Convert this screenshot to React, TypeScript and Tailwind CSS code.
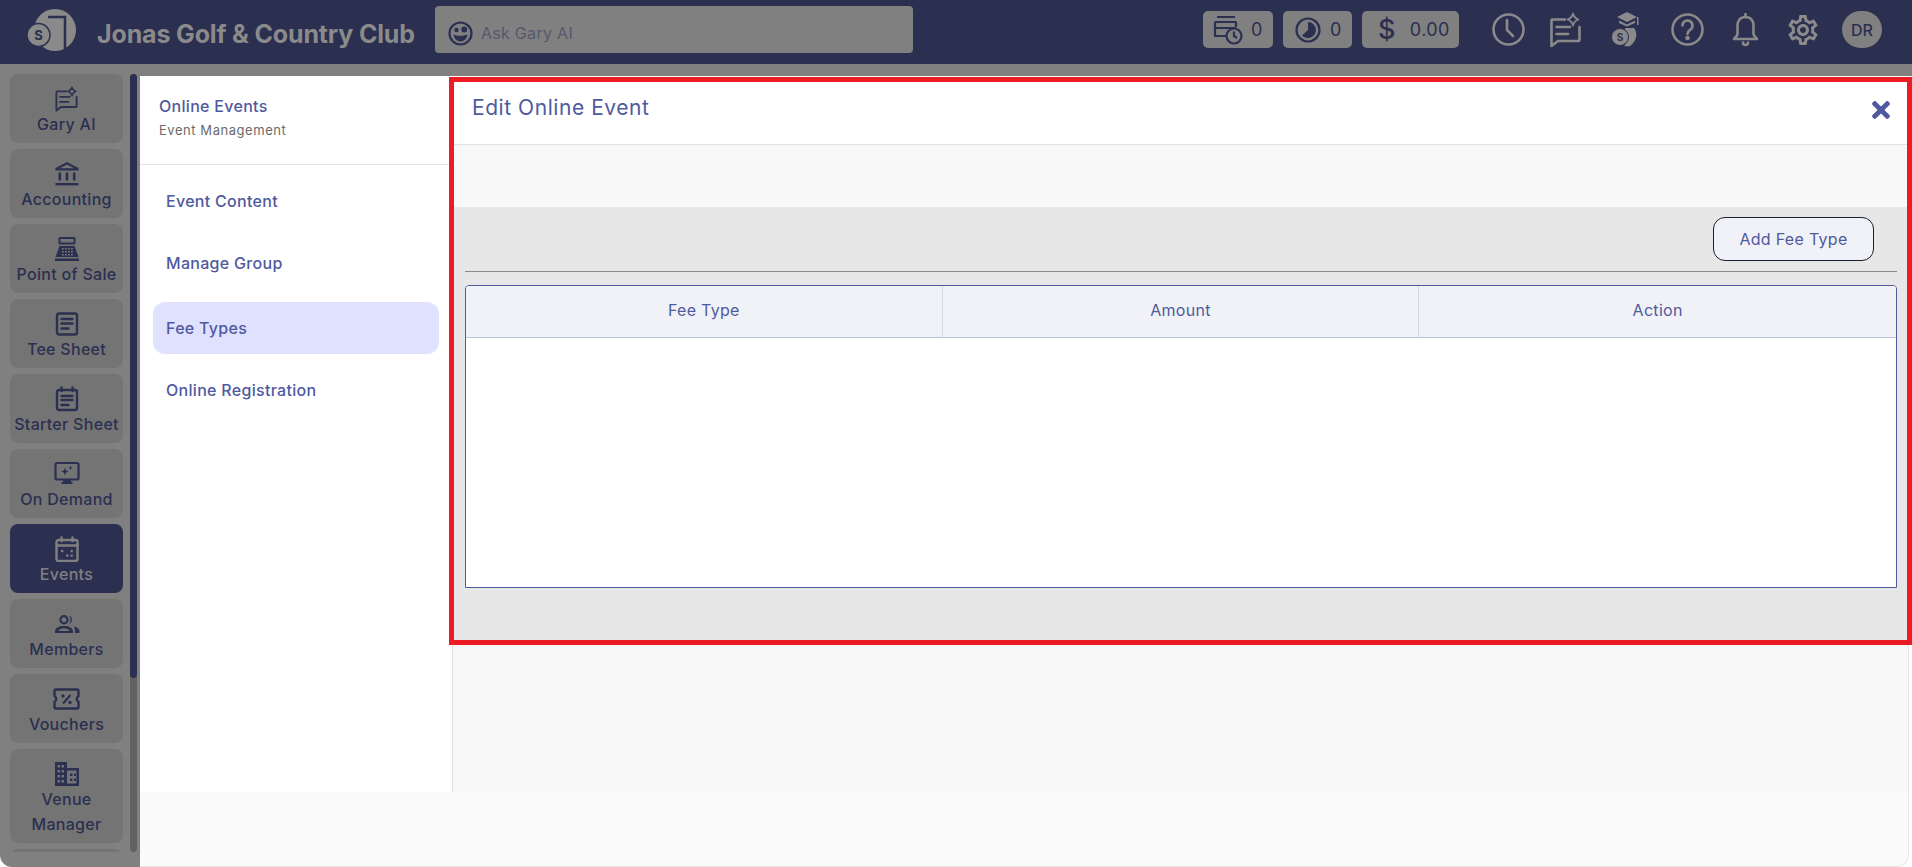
import React from "react";
import { FaTimes } from "react-icons/fa";
import { MdOutlineSettings } from "react-icons/md";

const Ic = ({ children, w = 26, h = 26, vb = "0 0 24 24", c = "#2b2f50", sw = 2 }: any) => (
  <svg width={w} height={h} viewBox={vb} fill="none" stroke={c} strokeWidth={sw} strokeLinecap="round" strokeLinejoin="round">
    {children}
  </svg>
);

const navy = "#2b2f50";
const hdr = "#8a8a8a";

const ChatSpark = ({ c, w = 31, h = 36 }: any) => (
  <Ic w={w} h={h} c={c} vb="0 0 31 36" sw={2.6}>
    <path d="M15 7.500H2.500Q1.500 7.500 1.500 8.500V34L8 29H28.500Q29.500 29 29.500 28V15" />
    <path d="M6.500 15H20M6.500 22H18" />
    <path d="M23 1.500Q24 6 28.500 7.500Q24 9 23 13.500Q22 9 17.500 7.500Q22 6 23 1.500z" strokeWidth="1.800" />
  </Ic>
);

const items: { label: string; icon: React.ReactNode; tall?: boolean; active?: boolean }[] = [
  { label: "Gary AI", icon: <ChatSpark c={navy} w={23} h={26} /> },
  {
    label: "Accounting",
    icon: (
      <svg width="26" height="26" viewBox="0 0 26 26" fill={navy}>
        <path d="M13 1L1.500 7v2.500h23V7zM13 3.600L20 7.200H6z" fillRule="evenodd" />
        <rect x="4.500" y="11.500" width="2.600" height="8" />
        <rect x="11.700" y="11.500" width="2.600" height="8" />
        <rect x="18.900" y="11.500" width="2.600" height="8" />
        <rect x="1.500" y="22" width="23" height="2.400" />
      </svg>
    ),
  },
  {
    label: "Point of Sale",
    icon: (
      <svg width="26" height="26" viewBox="0 0 26 26" fill={navy}>
        <path d="M6 1h14a1.500 1.500 0 0 1 1.500 1.500V7A1.500 1.500 0 0 1 20 8.500H6A1.500 1.500 0 0 1 4.500 7V2.500A1.500 1.500 0 0 1 6 1zM6.500 3v3.500h13V3z" fillRule="evenodd" />
        <path d="M5.500 10h15l4 11H1.500zM1 22.500h24V25H1z" />
        <g fill="#747474">
          <rect x="8" y="12" width="1.800" height="1.500" /><rect x="11" y="12" width="1.800" height="1.500" /><rect x="14" y="12" width="1.800" height="1.500" /><rect x="17" y="12" width="1.800" height="1.500" />
          <rect x="8" y="15" width="1.800" height="1.500" /><rect x="11" y="15" width="1.800" height="1.500" /><rect x="14" y="15" width="1.800" height="1.500" /><rect x="17" y="15" width="1.800" height="1.500" />
          <rect x="8" y="18" width="1.800" height="1.500" /><rect x="11" y="18" width="1.800" height="1.500" /><rect x="14" y="18" width="1.800" height="1.500" /><rect x="17" y="18" width="1.800" height="1.500" />
        </g>
      </svg>
    ),
  },
  {
    label: "Tee Sheet",
    icon: (
      <Ic vb="0 0 26 26" sw={2.4}>
        <rect x="3" y="2.500" width="20" height="21" rx="2" />
        <path d="M7.500 8h11M7.500 12.500h11M7.500 17.500h7" />
      </Ic>
    ),
  },
  {
    label: "Starter Sheet",
    icon: (
      <Ic vb="0 0 26 26" sw={2.4}>
        <rect x="3" y="4" width="20" height="20" rx="2" />
        <path d="M7.500 1.500V5M18.500 1.500V5M7.500 10h11M7.500 14h11M7.500 19h7" />
      </Ic>
    ),
  },
  {
    label: "On Demand",
    icon: (
      <svg width="26" height="26" viewBox="0 0 26 26" fill="none">
        <rect x="1.500" y="2" width="23" height="16.500" rx="1.500" stroke={navy} strokeWidth="2.200" />
        <path d="M9 18.500h8v2.500H9zM7.500 21h11v2h-11z" fill={navy} />
        <path d="M11 6.500l1 3 3 1-3 1-1 3-1-3-3-1 3-1zM16.500 4.500l.6 1.700 1.700.6-1.700.6-.6 1.700-.6-1.700-1.700-.6 1.700-.6z" fill={navy} />
      </svg>
    ),
  },
  {
    label: "Events",
    active: true,
    icon: (
      <svg width="26" height="26" viewBox="0 0 26 26" fill="none" stroke="#808080" strokeWidth="2.400" strokeLinecap="round">
        <rect x="2.500" y="4" width="21" height="21" rx="2" />
        <path d="M2.500 9.500h21M7.500 1.500V5M18.500 1.500V5" />
        <g fill="#808080" stroke="none">
          <rect x="7" y="14" width="2.400" height="2.200" /><rect x="16.500" y="14" width="2.400" height="2.200" /><rect x="12" y="18.500" width="2.400" height="2.200" /><rect x="16.500" y="18.500" width="2.400" height="2.200" />
        </g>
      </svg>
    ),
  },
  {
    label: "Members",
    icon: (
      <svg width="26" height="18" viewBox="0 0 26 18" fill="none">
        <circle cx="10" cy="4.800" r="3.600" stroke={navy} strokeWidth="2.200" />
        <path d="M15 .6a4.500 4.500 0 0 1 0 8.400a7 7 0 0 0 0-8.400z" fill={navy} />
        <path d="M1 18v-1.500c0-3.500 4-5.500 9-5.500s9 2 9 5.500V18zM4.500 16h11c-.8-1.600-3-2.700-5.500-2.700s-4.700 1.100-5.500 2.700z" fill={navy} fillRule="evenodd" />
        <path d="M20 11.500c3 .8 5.500 2.500 5.500 5V18H21c0-2.500-.2-4.500-1-6.500z" fill={navy} />
      </svg>
    ),
  },
  {
    label: "Vouchers",
    icon: (
      <svg width="27" height="26" viewBox="0 0 27 26" fill="none">
        <path d="M3 3.500h21a1.500 1.500 0 0 1 1.500 1.500v5a3.500 3.500 0 0 0 0 6v5a1.500 1.500 0 0 1-1.500 1.500H3A1.500 1.500 0 0 1 1.500 21v-5a3.500 3.500 0 0 0 0-6V5A1.500 1.500 0 0 1 3 3.500z" stroke={navy} strokeWidth="2.400" />
        <path d="M10 17.500L17.500 9" stroke={navy} strokeWidth="2" />
        <circle cx="10" cy="10" r="1.700" fill={navy} /><circle cx="17" cy="16.500" r="1.700" fill={navy} />
      </svg>
    ),
  },
  {
    label: "Venue Manager",
    tall: true,
    icon: (
      <svg width="26" height="26" viewBox="0 0 26 26" fill={navy}>
        <path fillRule="evenodd" d="M1 1h12v6h12v18H1zM3.500 4v2.500h2.500V4zM7.500 4v2.500h2.500V4zM3.500 9v2.500h2.500V9zM7.500 9v2.500h2.500V9zM3.500 14v2.500h2.500V14zM7.500 14v2.500h2.500V14zM3.500 19v2.500h2.500V19zM7.500 19v2.500h2.500V19zM13 9.500v13h9.500v-13zM16 12.500h2.500V15H16zM20 12.500h2V15h-2zM16 17.500h2.500V20H16zM20 17.500h2V20h-2z" />
      </svg>
    ),
  },
];

function SidebarItem({ label, icon, active, tall }: any) {
  return (
    <div className={`flex flex-col items-center shrink-0 rounded-lg pt-[12px] ${tall ? "h-[94px]" : "h-[69px]"} ${active ? "bg-[#2b2f50] text-[#808080]" : "bg-[#747474] text-[#2b2f50]"}`}>
      <div className="h-[26px] flex items-center justify-center">{icon}</div>
      <div className="text-[16px] leading-[25px] font-medium tracking-[0.3px] text-center w-[90px]">
        {tall ? label : <span className="whitespace-nowrap block -mx-3">{label}</span>}
      </div>
    </div>
  );
}

const nav = ["Event Content", "Manage Group", "Fee Types", "Online Registration"];

export default function App() {
  return (
    <div className="w-[1912px] h-[867px] overflow-hidden flex flex-col bg-white font-['Inter','Liberation_Sans',sans-serif]">
      <header className="h-[64px] shrink-0 bg-[#2b2f50] flex items-center pb-[5px] text-[#8a8a8a]">
        <svg className="ml-[27px]" width="50" height="42" viewBox="0 0 50 42" fill="none">
          <circle cx="28" cy="21" r="21" fill={hdr} />
          <path d="M21 8H38V42" stroke="#2b2f50" strokeWidth="2.500" fill="none" />
          <circle cx="11.500" cy="26" r="11.500" fill={hdr} stroke="#2b2f50" strokeWidth="1.500" />
          <text x="11.500" y="31" textAnchor="middle" fontSize="13" fontWeight="700" fill="#2b2f50" fontFamily="Inter">S</text>
        </svg>
        <div className="ml-[20px] mt-[10px] text-[25px] font-bold tracking-[-0.15px] whitespace-nowrap">Jonas Golf &amp; Country Club</div>
        <div className="ml-[20px] w-[478px] h-[47px] rounded bg-[#808080] flex items-center pl-[13px] pt-[7px] gap-[8px]">
          <svg width="25" height="25" viewBox="0 0 25 25" fill="none">
            <circle cx="12.500" cy="12.500" r="11" stroke={navy} strokeWidth="2.200" />
            <circle cx="8.500" cy="9" r="2.200" fill={navy} />
            <rect x="13.500" y="5.500" width="5.500" height="6" rx="2.500" fill={navy} />
            <path d="M5.500 13.500c2.500 1.500 9 2 14 0c-.5 4-3.500 7-7 7s-6.500-3-7-7z" fill={navy} />
          </svg>
          <span className="text-[16px] tracking-[0.3px] text-[#55586c]">Ask Gary AI</span>
        </div>
        <div className="flex-1" />
        <div className="flex items-center gap-[10px] text-[#2b2f50]">
          <div className="w-[70px] h-[37px] rounded-[5px] bg-[#808080] flex items-center pl-[10px] gap-[7px] text-[18px]">
            <svg width="31" height="30" viewBox="0 0 31 30" fill="none" stroke={navy} strokeWidth="2.200">
              <path d="M4 2h18M1.500 7h22" />
              <path d="M13 21H2V7M23 7v5M2 13h21" />
              <circle cx="21" cy="21" r="7.500" />
              <path d="M21 16.500V21l3 2" />
            </svg>
            <span>0</span>
          </div>
          <div className="w-[69px] h-[37px] rounded-[5px] bg-[#808080] flex items-center pl-[12px] gap-[9px] text-[18px]">
            <svg width="26" height="26" viewBox="0 0 26 26" fill="none">
              <circle cx="13" cy="13" r="11.500" stroke={navy} strokeWidth="2.200" />
              <path d="M13 5a8 8 0 1 1-6 13.400L13 13z" fill={navy} />
            </svg>
            <span>0</span>
          </div>
          <div className="w-[97px] h-[37px] rounded-[5px] bg-[#808080] flex items-center pl-[16px] gap-[14px] text-[18px] tracking-[0.4px]">
            <span className="text-[27px] font-medium leading-none">$</span>
            <span>0.00</span>
          </div>
        </div>
        <div className="ml-[33px] flex items-center">
          <svg width="33" height="33" viewBox="0 0 33 33" fill="none" stroke={hdr} strokeWidth="2.600" strokeLinecap="round">
            <circle cx="16.500" cy="16.500" r="15" /><path d="M15 7v10l6 6" />
          </svg>
          <div className="ml-[25px] flex"><ChatSpark c={hdr} /></div>
          <svg className="ml-[30px]" width="28" height="35" viewBox="0 0 28 35" fill={hdr}>
            <path d="M16 0l10 5-10 5-10-5zM8 8.500l8 4 8-4V11l-8 3.500L8 11z" />
            <path d="M26 5v8h1.500V5z" />
            <path d="M14 16h9c4 5 3 13-4 18-2 .5-4 .5-6-.5 2-1 3-4 3-9V19h-2z" />
            <circle cx="9" cy="25" r="8.500" stroke="#2b2f50" strokeWidth="1" />
            <text x="9" y="29" fontSize="10" textAnchor="middle" fontWeight="700" fill="#2b2f50" fontFamily="Inter">S</text>
          </svg>
          <svg className="ml-[32px]" width="33" height="33" viewBox="0 0 33 33" fill="none" stroke={hdr} strokeWidth="2.600" strokeLinecap="round">
            <circle cx="16.500" cy="16.500" r="15" />
            <path d="M11.500 12.500a5 5 0 1 1 8 4c-2 1.500-3 2-3 4.500" />
            <circle cx="16.500" cy="25" r="1" fill={hdr} />
          </svg>
          <svg className="ml-[28px]" width="27" height="34" viewBox="0 0 27 34" fill="none" stroke={hdr} strokeWidth="2.600" strokeLinejoin="round">
            <path d="M13.500 4c-5 0-8 3.500-8 9v8c0 2-2 3-3.500 5h23c-1.500-2-3.500-3-3.500-5v-8c0-5.500-3-9-8-9z" />
            <path d="M13.500 1v3M11 29.500a2.500 2.500 0 0 0 5 0" strokeLinecap="round" />
          </svg>
          <MdOutlineSettings className="ml-[26px] text-[#8a8a8a] w-[36px] h-[36px]" />
          <div className="ml-[21px] mr-[30px] w-[40px] h-[37px] rounded-full bg-[#808080] flex items-center justify-center text-[16px] font-medium text-[#2b2f50]">DR</div>
        </div>
      </header>

      <div className="flex flex-1 min-h-0">
        <aside className="w-[140px] shrink-0 bg-[#808080] rounded-bl-xl flex pl-[10px] pt-[10px] gap-[7px]">
          <div className="w-[113px] h-[778px] overflow-hidden flex flex-col gap-[6px]">
            {items.map((it) => (
              <SidebarItem key={it.label} {...it} />
            ))}
            <div className="h-[69px] shrink-0 rounded-lg bg-[#747474]" />
          </div>
          <div className="w-[7px] h-[778px] rounded bg-[#626262]">
            <div className="h-[604px] rounded bg-[#2b2f50]" />
          </div>
        </aside>

        <main className="flex-1 min-w-0 flex flex-col">
          <div className="h-[12px] shrink-0 bg-[#808080]" />
          <div className="flex h-[716px] shrink-0 bg-white">
            <div className="w-[309px] shrink-0 flex flex-col">
              <div className="h-[89px] border-b border-[#e5e5e5] pl-[19px] pt-[19px] shrink-0">
                <div className="text-[16px] leading-[22px] font-medium tracking-[0.3px] text-[#4f5a9e]">Online Events</div>
                <div className="text-[13px] leading-[20px] mt-[3px] tracking-[0.55px] text-[#6b6b6b]">Event Management</div>
              </div>
              <div className="flex flex-col pl-[13px] pr-[10px] pt-[10px] gap-[10px]">
                {nav.map((n) => (
                  <div key={n} className={`h-[52px] flex items-center rounded-xl pl-[13px] text-[16px] font-medium tracking-[0.3px] text-[#4f5a9e] ${n === "Fee Types" ? "bg-[#dfe1ff] mt-[3px]" : ""}`}>{n}</div>
                ))}
              </div>
            </div>

            <div className="flex-1 min-w-0 flex flex-col pt-px">
              <section className="border-[5px] border-[#ed1c24] flex flex-col">
                <div className="h-[63px] shrink-0 bg-white border-b border-[#e2e2e2] flex items-center justify-between pl-[18px] pr-[17px]">
                  <div className="text-[21px] tracking-[0.55px] text-[#4f5a9e] mb-[11px]">Edit Online Event</div>
                  <FaTimes className="text-[#4f5a9e] w-[18px] h-[26px] mb-[6px]" />
                </div>
                <div className="h-[62px] shrink-0 bg-[#f8f8f8]" />
                <div className="h-[433px] shrink-0 bg-[#e7e7e7] pl-[11px] pr-[10px] pt-[10px]">
                  <div className="flex justify-end pr-[23px]">
                    <button className="w-[161px] h-[44px] rounded-xl border border-[#1b1d33] bg-[#f1f2f7] pb-[1px] text-[16px] tracking-[0.3px] text-[#4f5a9e]">Add Fee Type</button>
                  </div>
                  <div className="h-px bg-[#8a8a8a] mt-[10px]" />
                  <div className="mt-[13px] h-[303px] border border-[#4f5a9e] rounded-t bg-white flex flex-col overflow-hidden">
                    <div className="h-[52px] shrink-0 grid grid-cols-3 bg-[#f1f2f7] border-b border-[#b9c7de] text-[16px] tracking-[0.3px] text-[#4f5a9e]">
                      <div className="flex items-center justify-center border-r border-[#d4dae6] pb-[3px]">Fee Type</div>
                      <div className="flex items-center justify-center border-r border-[#d4dae6] pb-[3px]">Amount</div>
                      <div className="flex items-center justify-center pb-[3px]">Action</div>
                    </div>
                  </div>
                </div>
              </section>
              <div className="flex-1 ml-[3px] mr-[3px] border-x border-[#e2e2e2] bg-[#f8f8f8]" />
            </div>
          </div>
          <div className="flex-1 mr-[3px] bg-[#fafafa] border-r border-b border-[#e8e8e8] rounded-br-xl" />
        </main>
      </div>
    </div>
  );
}
